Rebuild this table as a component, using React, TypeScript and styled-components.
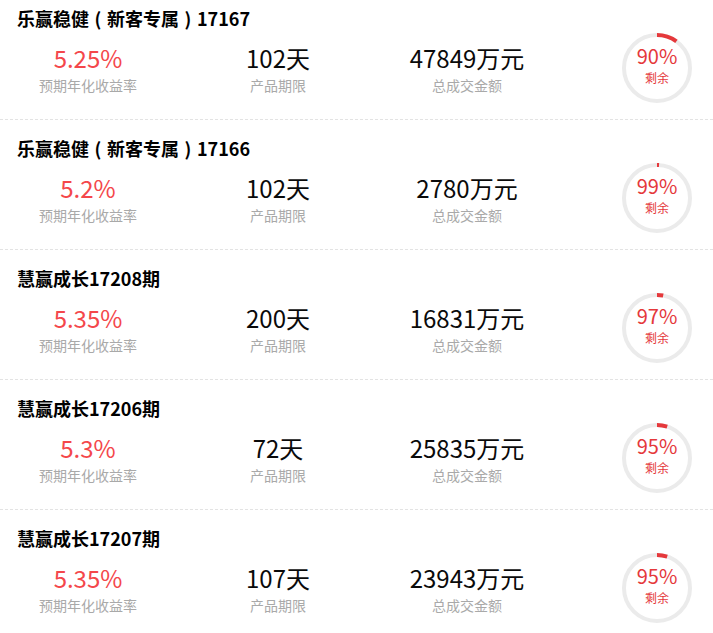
import React from "react";
import styled, { createGlobalStyle } from "styled-components";

const Global = createGlobalStyle`
  html, body { margin: 0; padding: 0; background: #fff; }
  body { font-family: "Noto Sans CJK SC", "Noto Sans", sans-serif; }
`;

const List = styled.div`
  width: 713px;
  display: flex;
  flex-direction: column;
`;

const Item = styled.div`
  box-sizing: border-box;
  height: 120px;
  margin-bottom: 10px;
  padding-top: 6px;
  border-bottom: 1px dashed #e3e3e3;
  display: flex;
  flex-direction: column;
`;

const Title = styled.div`
  padding-left: 17px;
  height: 24px;
  line-height: 24px;
  font-size: 18px;
  font-weight: 700;
  color: #000;
  white-space: nowrap;
`;

const Paren = styled.span`
  display: inline-block;
  width: 1em;
  text-align: center;
`;

const Body = styled.div`
  margin-top: 3px;
  height: 70px;
  display: flex;
  align-items: center;
`;

const Col = styled.div<{ $w: number }>`
  width: ${(p) => p.$w}px;
  display: flex;
  flex-direction: column;
  align-items: center;
`;

const Value = styled.div<{ $red?: boolean }>`
  font-size: 24px;
  line-height: 30px;
  height: 30px;
  color: ${(p) => (p.$red ? "#f4474b" : "#0a0a0a")};
  white-space: nowrap;
`;

const Label = styled.div`
  margin-top: 3px;
  font-size: 14px;
  line-height: 18px;
  color: #a9a9a9;
  white-space: nowrap;
`;

const Ring = styled.div`
  position: relative;
  margin-left: 68px;
  width: 70px;
  height: 70px;
`;

const RingText = styled.div`
  position: absolute;
  inset: 0;
  box-sizing: border-box;
  padding-bottom: 6px;
  display: flex;
  flex-direction: column;
  align-items: center;
  justify-content: center;
  color: #e5383b;
`;

const Pct = styled.div`
  font-size: 20px;
  line-height: 22px;
`;

const Left = styled.div`
  font-size: 12px;
  line-height: 16px;
  margin-top: 3px;
`;

type Row = { name: string; tag?: string; code: string; suffix?: string; rate: string; term: string; amount: string; left: number };

const rows: Row[] = [
  { name: "乐赢稳健", tag: "新客专属", code: "17167", rate: "5.25%", term: "102天", amount: "47849万元", left: 90 },
  { name: "乐赢稳健", tag: "新客专属", code: "17166", rate: "5.2%", term: "102天", amount: "2780万元", left: 99 },
  { name: "慧赢成长", code: "17208", suffix: "期", rate: "5.35%", term: "200天", amount: "16831万元", left: 97 },
  { name: "慧赢成长", code: "17206", suffix: "期", rate: "5.3%", term: "72天", amount: "25835万元", left: 95 },
  { name: "慧赢成长", code: "17207", suffix: "期", rate: "5.35%", term: "107天", amount: "23943万元", left: 95 },
];

function Progress({ left }: { left: number }) {
  const r = 33;
  const c = 2 * Math.PI * r;
  const sold = (100 - left) / 100;
  return (
    <Ring>
      <svg width="70" height="70" viewBox="0 0 70 70">
        <circle cx="35" cy="35" r={r} fill="none" stroke="#ebebeb" strokeWidth="4" />
        <circle
          cx="35"
          cy="35"
          r={r}
          fill="none"
          stroke="#e5383b"
          strokeWidth="4"
          strokeDasharray={`${c * sold} ${c}`}
          transform="rotate(-90 35 35)"
        />
      </svg>
      <RingText>
        <Pct>{left}%</Pct>
        <Left>剩余</Left>
      </RingText>
    </Ring>
  );
}

export default function App() {
  return (
    <>
      <Global />
      <List>
        {rows.map((r) => (
          <Item key={r.code}>
            <Title>
              {r.name}
              {r.tag && (
                <>
                  <Paren>(</Paren>
                  {r.tag}
                  <Paren>)</Paren>
                </>
              )}
              {r.code}
              {r.suffix}
            </Title>
            <Body>
              <Col $w={176}>
                <Value $red>{r.rate}</Value>
                <Label>预期年化收益率</Label>
              </Col>
              <Col $w={204}>
                <Value>{r.term}</Value>
                <Label>产品期限</Label>
              </Col>
              <Col $w={174}>
                <Value>{r.amount}</Value>
                <Label>总成交金额</Label>
              </Col>
              <Progress left={r.left} />
            </Body>
          </Item>
        ))}
      </List>
    </>
  );
}
